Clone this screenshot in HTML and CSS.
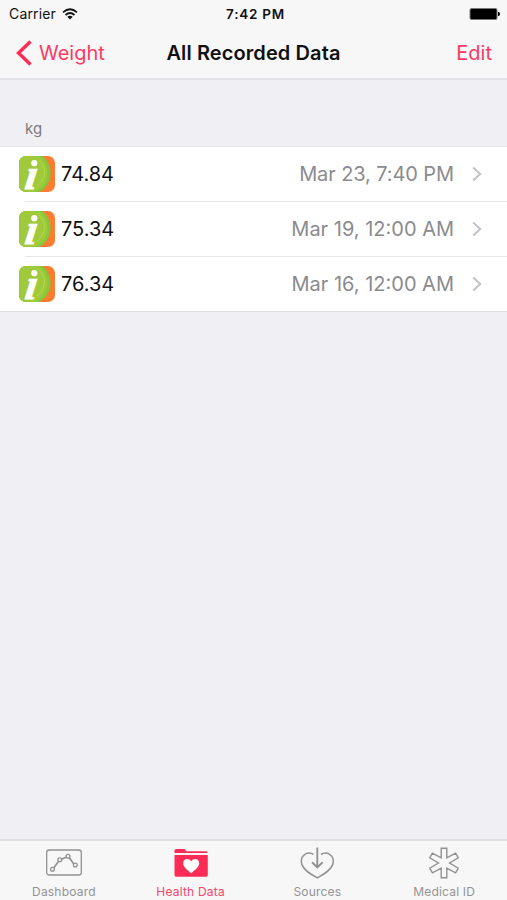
FILE: index.html
```
<!DOCTYPE html>
<html lang="en">
<head>
	<meta charset="utf-8">
	<title>All Recorded Data</title>
	<link rel="stylesheet" href="styles.css">
</head>
<body>
	<svg class="defs" width="0" height="0">
		<symbol id="app" viewBox="0 0 36 36">
			<rect width="36" height="36" fill="#fa7d32"/>
			<circle cx="10" cy="17" r="21.500" fill="#80cb3b"/>
			<circle cx="8" cy="17" r="20.500" fill="#a0ca3b"/>
			<path d="M20 4c8 8 7 19-2 26" fill="none" stroke="#b3da43"/>
			<circle cx="15.300" cy="7.200" r="3.100" fill="#fff"/>
			<text class="logo-i" transform="translate(5 32.500) skewX(-8)">ı</text>
		</symbol>
		<symbol id="chev" viewBox="0 0 10 16">
			<path d="M1.200 1.500 8.200 8l-7 6.500" fill="none" stroke="#c3c3c7" stroke-width="2"/>
		</symbol>
	</svg>

	<div class="screen">
		<header>
			<div class="status">
				<div class="carrier">
					<span>Carrier</span>
					<svg width="16" height="12" viewBox="0 0 16 12" fill="none" stroke="#111" stroke-width="1.700">
						<path d="M1 4.300Q8-1.800 15 4.300M3.500 7Q8 3 12.500 7"/>
						<path d="M5.300 8.800Q8 6.600 10.700 8.800L8 11.500z" fill="#111" stroke="none"/>
					</svg>
				</div>
				<div class="time">7:42 PM</div>
				<div class="battery">
					<svg width="31" height="12" viewBox="0 0 31 12">
						<rect x="1" y=".5" width="27" height="11" rx="1.500" stroke="#777"/>
						<path d="M29 4h.5a1.500 2 0 0 1 0 4h-.5z"/>
					</svg>
				</div>
			</div>
			<nav>
				<a class="back">
					<svg width="17" height="26" viewBox="0 0 17 26"><path d="M15.500 1.500 3.500 13l12 11.500" fill="none" stroke="#fb2d57" stroke-width="3.400"/></svg>
					<span>Weight</span>
				</a>
				<h1>All Recorded Data</h1>
				<a class="edit">Edit</a>
			</nav>
		</header>

		<main>
			<h2>kg</h2>
			<ul>
				<li>
					<svg class="app" width="36" height="36"><use href="#app"/></svg>
					<div class="line"><b>74.84</b><time class="short">Mar 23, 7:40 PM</time><svg width="10" height="16"><use href="#chev"/></svg></div>
				</li>
				<li>
					<svg class="app" width="36" height="36"><use href="#app"/></svg>
					<div class="line"><b>75.34</b><time>Mar 19, 12:00 AM</time><svg width="10" height="16"><use href="#chev"/></svg></div>
				</li>
				<li>
					<svg class="app" width="36" height="36"><use href="#app"/></svg>
					<div class="line"><b>76.34</b><time>Mar 16, 12:00 AM</time><svg width="10" height="16"><use href="#chev"/></svg></div>
				</li>
			</ul>
		</main>

		<footer>
			<a class="tab">
				<svg width="38" height="34" viewBox="0 0 38 34" fill="none" stroke="#929292" stroke-width="1.300">
					<rect x="1.700" y="5" width="34.600" height="25" rx="2.500"/>
					<path d="M8.800 22.800 13.500 16.500M16.500 14.200l4.500-2M24.300 12.700l4.500 6.200" stroke-width="1.700"/>
					<circle cx="7.500" cy="24.300" r="1.900"/><circle cx="14.800" cy="14.800" r="1.900"/><circle cx="23" cy="11.300" r="1.900"/><circle cx="30.300" cy="20" r="1.900"/>
				</svg>
				<span>Dashboard</span>
			</a>
			<a class="tab on">
				<svg width="38" height="34" viewBox="0 0 38 34" fill="#fc2c56">
					<path d="M2.500 8V5.500q0-1.500 1.500-1.500h8q1 0 1.500 1l.7 1.200H34q1.500 0 1.500 1.800z"/>
					<path d="M2.500 10h33.300v20q0 1.700-1.700 1.700H4.200q-1.700 0-1.700-1.700z"/>
					<path d="M19.200 28.200C15.500 24.900 11.200 22 11.200 18.200c0-4.400 5.700-5.600 8-1.800 2.300-3.800 8-2.600 8 1.800 0 3.800-4.300 6.700-8 10z" fill="#fff"/>
				</svg>
				<span>Health Data</span>
			</a>
			<a class="tab">
				<svg width="38" height="34" viewBox="0 0 38 34" fill="none" stroke="#929292" stroke-width="1.500">
					<path d="M15.500 9.500C10 6 3.300 9.500 3.300 16.300c0 7.200 8 12.200 16 16.500 8-4.300 16-9.300 16-16.500C35.300 9.500 28.500 6 23 9.500"/>
					<path d="M19.300 2.500v19.700M14 17.200l5.300 5.200 5.300-5.200" stroke-width="1.900"/>
				</svg>
				<span>Sources</span>
			</a>
			<a class="tab">
				<svg width="38" height="34" viewBox="0 0 38 34" fill="none" stroke="#929292" stroke-width="1.400">
					<path d="M16.200 3.200h5.600v9.700l8.800-4.800 2.700 4.700-8.800 5.200 8.800 5.200-2.700 4.700-8.800-4.800v9.700h-5.600v-9.700l-8.800 4.800-2.700-4.700 8.800-5.200-8.800-5.200 2.700-4.700 8.800 4.800z"/>
				</svg>
				<span>Medical ID</span>
			</a>
		</footer>
	</div>
</body>
</html>
```
FILE: styles.css
```
* {
	box-sizing: border-box;
}

body {
	margin: 0;
	font-family: Inter, Roboto, sans-serif;
	color: #111;
}

.defs {
	display: none;
}

.screen {
	display: flex;
	flex-direction: column;
	height: 900px;
	background: #efeff4;
}

header {
	height: 80px;
	background: #f7f7f8;
	border-bottom: 2px solid #e2e2e6;
}

.status {
	display: grid;
	grid-template-columns: 1fr auto 1fr;
	align-items: center;
	height: 27px;
	padding: 0 7px 0 9px;
	font-size: 14px;
}

.carrier {
	display: flex;
	align-items: center;
	gap: 6px;
	letter-spacing: 0.15px;
}

.time {
	padding-left: 2px;
	font-size: 13.500px;
	font-weight: 600;
	letter-spacing: 0.75px;
}

.battery {
	display: flex;
	justify-content: flex-end;
}

nav {
	display: grid;
	grid-template-columns: 1fr auto 1fr;
	align-items: center;
	height: 51px;
	padding: 0 15px;
	font-size: 20px;
}

.back {
	display: flex;
	align-items: center;
	gap: 7px;
	color: #fb3a62;
}

.edit {
	text-align: right;
	color: #fb3a62;
}

h1 {
	margin: 0;
	font-size: 20px;
	font-weight: 600;
	letter-spacing: 0.1px;
}

main {
	flex: 1;
}

h2 {
	height: 67px;
	margin: 0;
	padding: 39px 25px 0;
	border-bottom: 1px solid #e3e3e7;
	font-size: 15px;
	line-height: 20px;
	font-weight: 400;
	color: #7b7b80;
}

ul {
	margin: 0;
	padding: 0;
	list-style: none;
	background: #fff;
	border-bottom: 1px solid #dddde1;
}

li {
	display: flex;
	align-items: center;
	height: 54px;
	padding-left: 19px;
}

/* separator starts under the icon */
li + li {
	height: 55px;
	background: linear-gradient(#e9e9eb, #e9e9eb) 25px 0 / 100% 1px no-repeat;
}

.app {
	border-radius: 7px;
}

.logo-i {
	font: italic bold 43px "Liberation Serif", serif;
	fill: #fff;
	stroke: #fff;
	stroke-width: 1px;
}

.line {
	display: flex;
	flex: 1;
	align-items: center;
	padding: 0 25px 0 6px;
	font-size: 20px;
}

.line b {
	flex: 1;
	font-weight: 400;
}

time {
	margin-right: 18px;
	color: #8b8b8e;
}

.short {
	letter-spacing: -0.1px;
}

footer {
	display: flex;
	height: 61px;
	background: #f7f7f8;
	border-top: 2px solid #dfdfe3;
}

.tab {
	display: flex;
	flex: 1;
	flex-direction: column;
	align-items: center;
	padding: 4px 0 0 1px;
	font-size: 12px;
	line-height: 16px;
	letter-spacing: 0.2px;
	color: #949494;
}

.tab svg {
	flex: none;
	margin-bottom: 5px;
}

.on {
	color: #fb456b;
}
```
